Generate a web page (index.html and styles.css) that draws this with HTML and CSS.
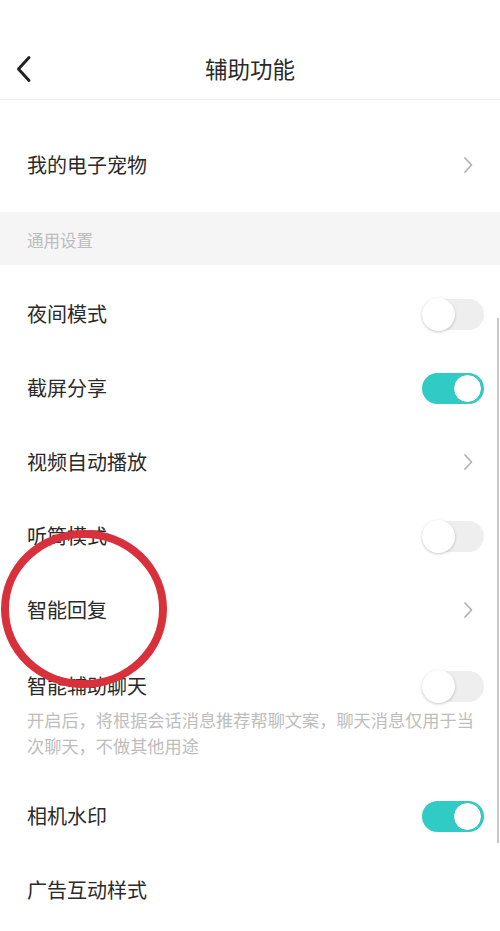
FILE: index.html
```html
<!DOCTYPE html>
<html lang="zh-CN">
<head>
<meta charset="utf-8">
<title>辅助功能</title>
<link rel="stylesheet" href="styles.css">
</head>
<body>
<div class="page">
  <header class="topbar">
    <svg class="back" width="20" height="28" viewBox="0 0 20 28"><path d="M14 2.5 L3.5 14 L14 25.5" fill="none" stroke="#222" stroke-width="3" stroke-linecap="round" stroke-linejoin="round"/></svg>
    <h1 class="title">辅助功能</h1>
  </header>

  <section class="block first">
    <div class="row">
      <span class="label">我的电子宠物</span>
      <svg class="chev" width="12" height="18" viewBox="0 0 12 18"><path d="M3 2 L9.5 9 L3 16" fill="none" stroke="#b3b3b3" stroke-width="1.8" stroke-linecap="round" stroke-linejoin="round"/></svg>
    </div>
  </section>

  <div class="section-title">通用设置</div>

  <section class="block list">
    <div class="row">
      <span class="label">夜间模式</span>
      <span class="switch"><span class="knob"></span></span>
    </div>
    <div class="row">
      <span class="label">截屏分享</span>
      <span class="switch on"><span class="knob"></span></span>
    </div>
    <div class="row">
      <span class="label">视频自动播放</span>
      <svg class="chev" width="12" height="18" viewBox="0 0 12 18"><path d="M3 2 L9.5 9 L3 16" fill="none" stroke="#b3b3b3" stroke-width="1.8" stroke-linecap="round" stroke-linejoin="round"/></svg>
    </div>
    <div class="row">
      <span class="label">听筒模式</span>
      <span class="switch"><span class="knob"></span></span>
    </div>
    <div class="row">
      <span class="label">智能回复</span>
      <svg class="chev" width="12" height="18" viewBox="0 0 12 18"><path d="M3 2 L9.5 9 L3 16" fill="none" stroke="#b3b3b3" stroke-width="1.8" stroke-linecap="round" stroke-linejoin="round"/></svg>
    </div>
    <div class="item">
      <div class="item-head">
        <span class="label">智能辅助聊天</span>
        <span class="switch"><span class="knob"></span></span>
      </div>
      <p class="desc">开启后，将根据会话消息推荐帮聊文案，聊天消息仅用于当次聊天，不做其他用途</p>
    </div>
    <div class="row">
      <span class="label">相机水印</span>
      <span class="switch on"><span class="knob"></span></span>
    </div>
    <div class="row">
      <span class="label">广告互动样式</span>
    </div>
  </section>

  <div class="scrollbar"></div>

  <svg class="annotation" width="174" height="166" viewBox="0 0 174 166"><ellipse cx="84" cy="83" rx="79" ry="75" fill="none" stroke="#d8313b" stroke-width="8"/></svg>
</div>
</body>
</html>
```

FILE: styles.css
```css
* { box-sizing: border-box; }

html, body {
  margin: 0;
  padding: 0;
  background: #fff;
}

body {
  font-family: "Noto Sans CJK SC", "Noto Sans", sans-serif;
  color: #2a2a2a;
}

.page {
  position: relative;
  width: 500px;
  height: 931px;
  overflow: hidden;
  background: #fff;
}

.topbar {
  position: relative;
  height: 100px;
  border-bottom: 1px solid #f1f1f1;
  display: flex;
  align-items: center;
  justify-content: center;
  padding-top: 38px;
}

.back {
  position: absolute;
  left: 15px;
  top: 55px;
}

.title {
  margin: 0;
  font-size: 22.5px;
  font-weight: 400;
  color: #2a2a2a;
  line-height: 1;
}

.block.first {
  padding-top: 28px;
  padding-bottom: 10px;
}

.row {
  height: 74px;
  display: flex;
  align-items: center;
  justify-content: space-between;
  padding: 0 16px 0 27px;
}

.label {
  font-size: 20px;
  line-height: 1;
  color: #2a2a2a;
}

.chev {
  margin-right: 10px;
}

.section-title {
  height: 53px;
  background: #f5f5f5;
  display: flex;
  align-items: center;
  padding: 3px 0 0 27px;
  font-size: 16.5px;
  color: #bdbdbd;
}

.block.list {
  padding-top: 12px;
}

.switch {
  position: relative;
  width: 62px;
  height: 31px;
  border-radius: 16px;
  background: #eeeeee;
  flex: none;
}

.switch .knob {
  position: absolute;
  left: 0;
  top: -1px;
  width: 33px;
  height: 33px;
  border-radius: 50%;
  background: #fff;
  box-shadow: 0 1px 3px rgba(0, 0, 0, 0.22);
}

.switch.on {
  background: #2fcbc4;
}

.switch.on .knob {
  left: auto;
  right: 2px;
  top: 1px;
  width: 29px;
  height: 29px;
  box-shadow: none;
  border: 1.5px solid #27b9b2;
}

.item {
  padding: 20px 16px 20px 27px;
}

.item-head {
  height: 38px;
  display: flex;
  align-items: center;
  justify-content: space-between;
}

.desc {
  margin: 2px 0 0;
  font-size: 17.2px;
  line-height: 26px;
  color: #bdbdbd;
  padding-right: 2px;
}

.scrollbar {
  position: absolute;
  left: 497px;
  top: 318px;
  width: 2px;
  height: 525px;
  background: #c8c8c8;
}

.annotation {
  position: absolute;
  left: 0;
  top: 526px;
}
```
